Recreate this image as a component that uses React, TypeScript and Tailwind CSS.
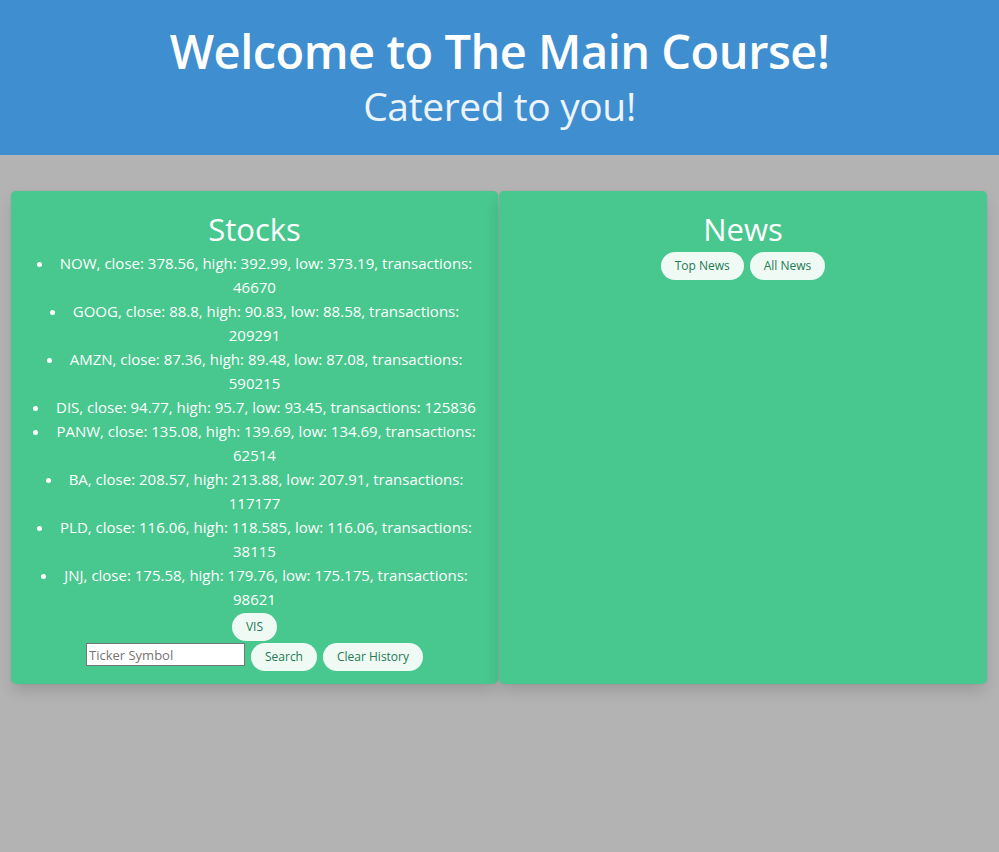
import React from "react";

const stocks = [
  "NOW, close: 378.56, high: 392.99, low: 373.19, transactions: 46670",
  "GOOG, close: 88.8, high: 90.83, low: 88.58, transactions: 209291",
  "AMZN, close: 87.36, high: 89.48, low: 87.08, transactions: 590215",
  "DIS, close: 94.77, high: 95.7, low: 93.45, transactions: 125836",
  "PANW, close: 135.08, high: 139.69, low: 134.69, transactions: 62514",
  "BA, close: 208.57, high: 213.88, low: 207.91, transactions: 117177",
  "PLD, close: 116.06, high: 118.585, low: 116.06, transactions: 38115",
  "JNJ, close: 175.58, high: 179.76, low: 175.175, transactions: 98621",
];

const btn =
  "h-[28px] px-[14px] rounded-full bg-[#effaf5] text-[#257953] text-[12px] leading-none flex items-center justify-center";

export default function App() {
  return (
    <div
      className="min-h-[852px] bg-[#b3b3b3]"
      style={{ fontFamily: '"Open Sans", "Noto Sans", sans-serif' }}
    >
      <header className="h-[155px] bg-[#3e8ed0] flex flex-col items-center justify-center text-white">
        <h1 className="text-[47px] font-semibold leading-[54px] tracking-[-0.5px] -mt-[2px]">
          Welcome to The Main Course!
        </h1>
        <h2 className="text-[39px] leading-[48px] text-white/90 tracking-[-0.4px] mt-[4px]">
          Catered to you!
        </h2>
      </header>
      <main className="flex pt-[36px] pl-[11px] pr-[12px]">
        <section className="w-[487px] bg-[#48c78e] rounded-[5px] shadow-[0_8px_16px_-2px_rgba(10,10,10,0.15),0_0_0_1px_rgba(10,10,10,0.02)] pt-[20px] pb-[13px] flex flex-col items-center text-white">
          <h3 className="text-[31px] leading-[36px]">Stocks</h3>
          <ul className="list-none w-[450px] text-center text-[15px] leading-[24px] mt-[4px]">
            {stocks.map((s) => (
              <li key={s}>
                <span className="inline-block w-[5px] h-[5px] rounded-full bg-white mr-[18px] align-middle"></span>
                {s}
              </li>
            ))}
          </ul>
          <button className={btn + " mt-[2px]"}>VIS</button>
          <div className="flex items-start gap-[6px] mt-[2px]">
            <input
              className="w-[159px] h-[23px] bg-white border border-[#767676] text-[13px] px-[2px] text-black placeholder:text-[#757575]"
              placeholder="Ticker Symbol"
            />
            <button className={btn}>Search</button>
            <button className={btn}>Clear History</button>
          </div>
        </section>
        <section className="flex-1 ml-[1px] bg-[#48c78e] rounded-[5px] shadow-[0_8px_16px_-2px_rgba(10,10,10,0.15),0_0_0_1px_rgba(10,10,10,0.02)] pt-[20px] flex flex-col items-center text-white">
          <h3 className="text-[31px] leading-[36px]">News</h3>
          <div className="flex gap-[6px] mt-[5px]">
            <button className={btn}>Top News</button>
            <button className={btn}>All News</button>
          </div>
        </section>
      </main>
    </div>
  );
}
